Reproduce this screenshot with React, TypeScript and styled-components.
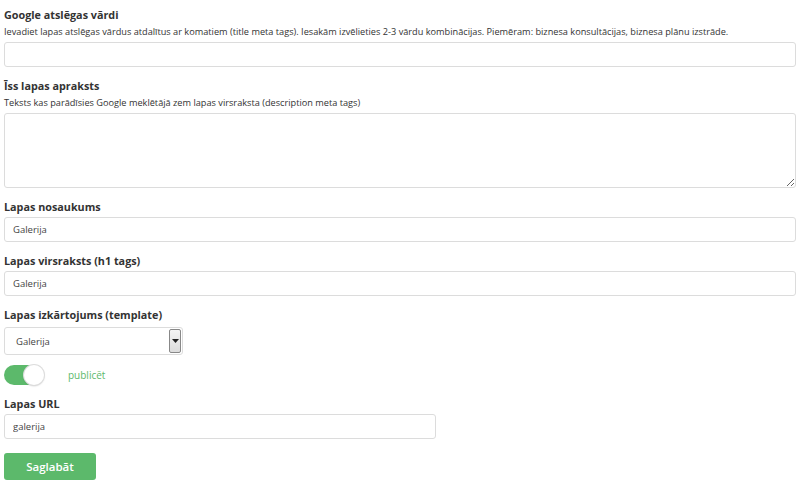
import { useState } from 'react'
import styled, { createGlobalStyle } from 'styled-components'

const Global = createGlobalStyle`
  body {
    margin: 0;
    padding: 6px 4px;
    background: #fff;
    font-family: "Open Sans", "DejaVu Sans", sans-serif;
    color: #333;
  }
  * { box-sizing: border-box; }
`

const GREEN = '#5cb96b'

function App() {
	const [published, setPublished] = useState(true)

	return (
		<>
			<Global />
			<Form onSubmit={e => e.preventDefault()}>
				<Group>
					<Label>Google atslēgas vārdi</Label>
					<Hint>Ievadiet lapas atslēgas vārdus atdalītus ar komatiem (title meta tags). Iesakām izvēlieties 2-3 vārdu kombinācijas. Piemēram: biznesa konsultācijas, biznesa plānu izstrāde.</Hint>
					<Input type="text" defaultValue="" />
				</Group>
				<Group>
					<Label>Īss lapas apraksts</Label>
					<Hint>Teksts kas parādīsies Google meklētājā zem lapas virsraksta (description meta tags)</Hint>
					<TextArea defaultValue="" />
				</Group>
				<Group>
					<Label>Lapas nosaukums</Label>
					<Input type="text" defaultValue="Galerija" />
				</Group>
				<Group>
					<Label>Lapas virsraksts (h1 tags)</Label>
					<Input type="text" defaultValue="Galerija" />
				</Group>
				<Group>
					<Label>Lapas izkārtojums (template)</Label>
					<Select>
						<span>Galerija</span>
						<Arrow>
							<svg width="7" height="4" viewBox="0 0 7 4"><path d="M0 0h7L3.5 4z" fill="#222" /></svg>
						</Arrow>
					</Select>
				</Group>
				<ToggleRow>
					<Toggle $on={published} onClick={() => setPublished(p => !p)} type="button">
						<Knob />
					</Toggle>
					<ToggleText>publicēt</ToggleText>
				</ToggleRow>
				<Group>
					<Label>Lapas URL</Label>
					<Input type="text" defaultValue="galerija" $width={432} />
				</Group>
				<SaveButton type="submit">Saglabāt</SaveButton>
			</Form>
		</>
	)
}

export default App

const Form = styled.form`
  display: flex;
  flex-direction: column;
  width: 792px;
`

const Group = styled.div`
  display: flex;
  flex-direction: column;
  margin-bottom: 10px;
`

const Label = styled.label`
  font-size: 10.8px;
  font-weight: 700;
  line-height: 18px;
  color: #333;
  margin-bottom: 1px;
`

const Hint = styled.div`
  font-size: 9.2px;
  line-height: 15px;
  color: #333;
  margin-top: -1px;
  margin-bottom: 3px;
`

const Input = styled.input<{ $width?: number }>`
  width: ${p => p.$width ? `${p.$width}px` : '100%'};
  height: 25px;
  border: 1px solid #dcdcdc;
  border-radius: 3px;
  padding: 0 8px;
  font-family: inherit;
  font-size: 9.5px;
  color: #444;
  outline: none;
`

const TextArea = styled.textarea`
  width: 100%;
  height: 75px;
  margin: 0;
  border: 1px solid #dcdcdc;
  border-radius: 3px;
  padding: 6px 8px;
  font-family: inherit;
  font-size: 9.5px;
  outline: none;
  display: block;
`

const Select = styled.div`
  width: 179px;
  height: 28px;
  margin-top: 2px;
  border: 1px solid #dcdcdc;
  border-radius: 3px;
  display: flex;
  align-items: center;
  justify-content: space-between;
  padding: 0 1px 0 11px;
  font-size: 9.5px;
  color: #444;
`

const Arrow = styled.div`
  width: 12px;
  height: 24px;
  border: 1px solid #888;
  border-radius: 2px;
  background: linear-gradient(#f4f4f4, #dcdcdc);
  display: flex;
  align-items: center;
  justify-content: center;
`

const ToggleRow = styled.div`
  display: flex;
  align-items: center;
  gap: 24px;
  margin-bottom: 10px;
`

const Toggle = styled.button<{ $on: boolean }>`
  width: 40px;
  height: 20px;
  border-radius: 10px;
  border: none;
  padding: 0;
  background: ${p => p.$on ? GREEN : '#ccc'};
  display: flex;
  align-items: center;
  justify-content: ${p => p.$on ? 'flex-end' : 'flex-start'};
  cursor: pointer;
`

const Knob = styled.span`
  width: 20px;
  height: 20px;
  border-radius: 50%;
  background: #fff;
  box-shadow: 0 0 0 1px #ddd, 0 1px 2px rgba(0, 0, 0, 0.25);
`

const ToggleText = styled.span`
  font-size: 10px;
  color: ${GREEN};
`

const SaveButton = styled.button`
  align-self: flex-start;
  width: 92px;
  height: 27px;
  margin-top: 4px;
  border: none;
  border-radius: 3px;
  background: ${GREEN};
  color: #fff;
  font-family: inherit;
  font-size: 11.5px;
  font-weight: 600;
  cursor: pointer;
`
